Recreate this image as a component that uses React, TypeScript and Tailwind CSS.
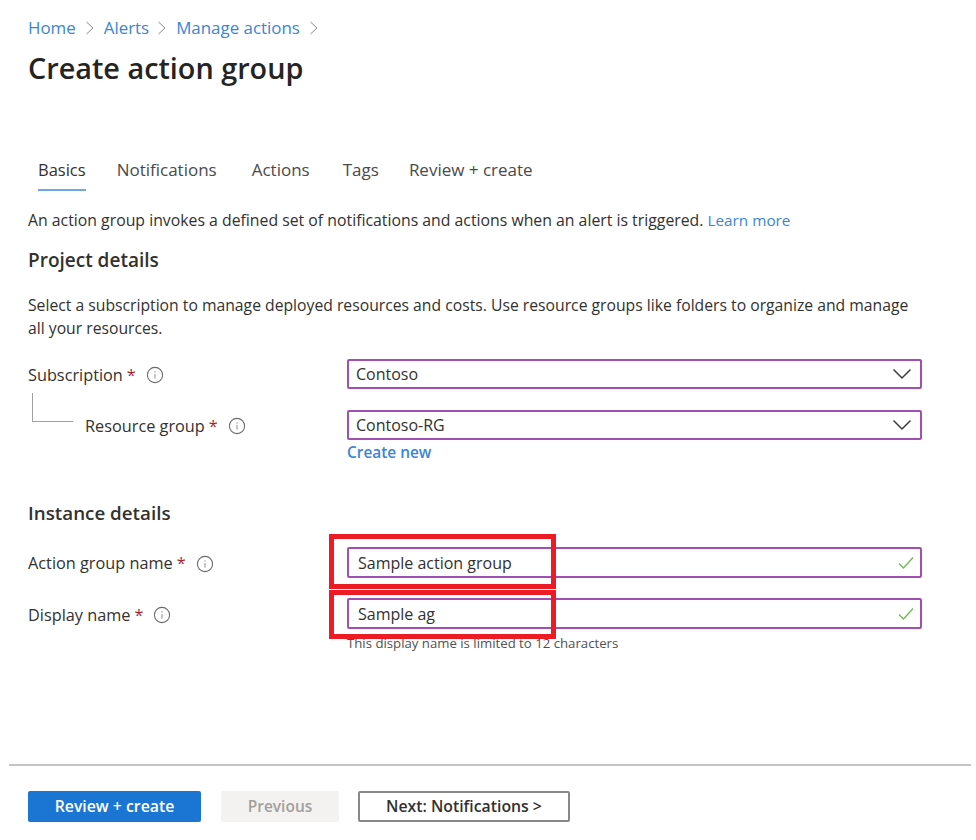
import React from "react";

const Info = () => (
  <svg width="18" height="18" viewBox="0 0 18 18" fill="none" className="shrink-0">
    <circle cx="9" cy="9" r="7.6" stroke="#6b6b6b" strokeWidth="1.1" />
    <path d="M9 8v4.6" stroke="#8a8a8a" strokeWidth="1" />
    <circle cx="9" cy="5.9" r="0.7" fill="#8a8a8a" />
  </svg>
);

const Chevron = () => (
  <svg width="20" height="12" viewBox="0 0 20 12" fill="none" className="shrink-0">
    <path d="M1.500 1.500 10 10l8.500-8.500" stroke="#3c3c3c" strokeWidth="1.500" />
  </svg>
);

const Check = () => (
  <svg width="16" height="14" viewBox="0 0 16 14" fill="none" className="-mr-[2px] shrink-0">
    <path d="M1 7.500 5.500 12 15 1.500" stroke="#6fbb5a" strokeWidth="1.400" />
  </svg>
);

const Crumb = () => (
  <svg width="10" height="14" viewBox="0 0 10 14" fill="none" className="shrink-0">
    <path d="M1.500 1 8 7l-6.500 6" stroke="#8a8a8a" strokeWidth="1" />
  </svg>
);

const Star = () => <span className="text-[#a4262c]">*</span>;

function Field({ text, right, pad = "pl-[7px]" }: { text: string; right: React.ReactNode; pad?: string }) {
  return (
    <div className={`flex h-full w-[575px] items-center justify-between rounded-[2px] border-2 border-[#a24fb4] bg-white pr-[8px] ${pad} text-[16px] text-[#323130]`}>
      <span>{text}</span>
      {right}
    </div>
  );
}

function Label({ text, drop = "pt-[2px]" }: { text: string; drop?: string }) {
  return (
    <div className={`flex items-center ${drop} text-[16.300px] font-medium`}>
      <span>{text}</span>
      <span className="ml-[4px]"><Star /></span>
      <span className="ml-[10px] flex"><Info /></span>
    </div>
  );
}

export default function App() {
  return (
    <div className="relative flex h-[840px] w-[976px] flex-col overflow-hidden bg-white text-[#323130] [font-family:'Open_Sans','Noto_Sans',sans-serif]">
      <div className="flex h-[40px] items-end pl-[28px] text-[16.900px] leading-[24px] text-[#3a85d6]">
        <div className="flex items-center">
          <span>Home</span>
          <span className="mx-[9px] flex"><Crumb /></span>
          <span>Alerts</span>
          <span className="ml-[8px] mr-[9px] flex"><Crumb /></span>
          <span>Manage actions</span>
          <span className="mx-[9px] flex"><Crumb /></span>
        </div>
      </div>
      <h1 className="mt-[8px] pl-[28px] text-[28.800px] leading-[40px] font-semibold text-[#252423]">Create action group</h1>

      <div className="mt-[70px] flex pl-[38px] text-[17px] leading-[24px] text-[#4a4a4a]">
        <div className="border-b-2 border-[#6ea8e0] pb-[7px] text-[16.500px] text-[#323130]">Basics</div>
        <div className="ml-[31px]">Notifications</div>
        <div className="ml-[35px]">Actions</div>
        <div className="ml-[33px]">Tags</div>
        <div className="ml-[30px]">Review + create</div>
      </div>

      <p className="mt-[17px] pl-[28px] text-[15.820px] leading-[24px]">
        An action group invokes a defined set of notifications and actions when an alert is triggered.{" "}
        <span className="text-[15.300px] text-[#3a85d6]">Learn more</span>
      </p>
      <h2 className="mt-[16px] pl-[28px] text-[19px] leading-[24px] font-semibold">Project details</h2>
      <p className="mt-[22px] w-[920px] pl-[28px] text-[15.730px] leading-[23px]">
        Select a subscription to manage deployed resources and costs. Use resource groups like folders to organize and manage all your resources.
      </p>

      <div className="mt-[19px] flex h-[30px] items-center justify-between pl-[28px] pr-[54px]">
        <Label text="Subscription" />
        <Field text="Contoso" right={<Chevron />} />
      </div>

      <div className="mt-[21px] flex h-[30px] items-center justify-between pl-[85px] pr-[54px]">
        <Label text="Resource group" />
        <Field text="Contoso-RG" right={<Chevron />} />
      </div>
      <div className="mt-[1px] pl-[347px] text-[15.400px] leading-[24px] font-semibold text-[#3a85d6]">Create new</div>

      <h2 className="mt-[36px] pl-[28px] text-[18.800px] leading-[24px] font-semibold">Instance details</h2>

      <div className="mt-[22px] flex h-[31px] items-center justify-between pl-[28px] pr-[54px]">
        <Label text="Action group name" />
        <Field text="Sample action group" right={<Check />} pad="pl-[9px]" />
      </div>

      <div className="mt-[20px] flex h-[31px] items-center justify-between pl-[28px] pr-[54px]">
        <Label text="Display name" drop="pt-[3px]" />
        <Field text="Sample ag" right={<Check />} pad="pl-[9px]" />
      </div>
      <div className="mt-[6px] pl-[347px] text-[13.200px] leading-[16px] text-[#505050]">This display name is limited to 12 characters</div>

      <div className="mx-[9px] mt-[113px] h-[2px] w-[962px] bg-[#c4c4c4]" />

      <div className="mt-[25px] flex pl-[28px] text-[15.800px] font-semibold">
        <button className="h-[31px] w-[173px] rounded-[2px] bg-[#1a76d2] text-white">Review + create</button>
        <button className="ml-[20px] h-[31px] w-[118px] rounded-[2px] bg-[#f3f2f1] text-[15.500px] text-[#a19f9d]">Previous</button>
        <button className="ml-[19px] h-[31px] w-[212px] rounded-[2px] border-2 border-[#8a8886] bg-white text-[#323130]">Next: Notifications &gt;</button>
      </div>

      {/* Red annotation boxes drawn over the form */}
      <div className="absolute left-[329px] top-[534px] h-[55px] w-[227px] border-[5px] border-[#ed1c24]" />
      <div className="absolute left-[329px] top-[590px] h-[49px] w-[227px] border-[5px] border-[#ed1c24]" />
      {/* Tree connector between Subscription and Resource group */}
      <div className="absolute left-[32px] top-[393px] h-[29px] w-[41px] border-b border-l border-[#a0a0a0]" />
    </div>
  );
}
